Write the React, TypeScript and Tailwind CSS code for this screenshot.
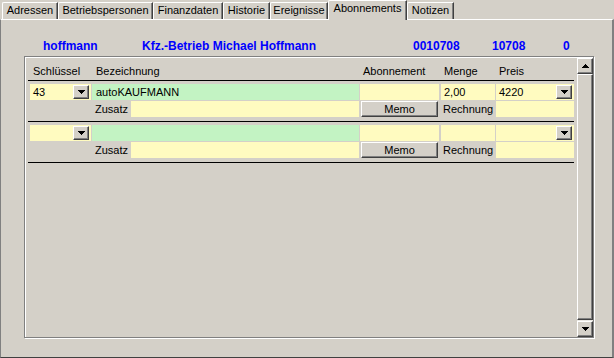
const tabs = [
  { label: "Adressen", w: "w-[56px]" },
  { label: "Betriebspersonen", w: "w-[95px]" },
  { label: "Finanzdaten", w: "w-[70px]" },
  { label: "Historie", w: "w-[47px]" },
  { label: "Ereignisse", w: "w-[58px]" },
  { label: "Abonnements", w: "w-[79px]", active: true },
  { label: "Notizen", w: "w-[47px]" },
];

const raised =
  "bg-[#d4d0c8] border border-t-white border-l-white border-r-[#404040] border-b-[#404040] shadow-[inset_-1px_-1px_0_#808080]";

const DownArrow = () => (
  <svg width="7" height="4" viewBox="0 0 7 4" shapeRendering="crispEdges">
    <path d="M0 0H7V1H6V2H5V3H4V4H3V3H2V2H1V1H0Z" fill="#000" />
  </svg>
);

const UpArrow = () => (
  <svg width="7" height="4" viewBox="0 0 7 4" shapeRendering="crispEdges">
    <path d="M3 0H4V1H5V2H6V3H7V4H0V3H1V2H2V1H3Z" fill="#000" />
  </svg>
);

const DropBtn = () => (
  <div className={`w-[16px] h-[14px] mr-[2px] flex items-center justify-center ${raised}`}>
    <DownArrow />
  </div>
);

type Row = { key: string; bez: string; menge: string; preis: string };

const rows: Row[] = [
  { key: "43", bez: "autoKAUFMANN", menge: "2,00", preis: "4220" },
  { key: "", bez: "", menge: "", preis: "" },
];

const SubRow = ({ row }: { row: Row }) => (
  <div className="pt-[3px] pb-[4px] pl-[2px] border-b border-black">
    <div className="flex h-[16px] leading-[13px]">
      <div className="w-[61px] bg-[#fffbc0] flex items-center justify-between pl-[3px]">
        <span>{row.key}</span>
        <DropBtn />
      </div>
      <div className="w-[267px] ml-[1px] bg-[#c3f3c3] flex items-center pl-[4px]">
        {row.bez}
      </div>
      <div className="w-[79px] ml-[1px] bg-[#fffbc0]"></div>
      <div className="w-[54px] ml-[2px] bg-[#fffbc0] flex items-center pl-[3px]">
        {row.menge}
      </div>
      <div className="w-[78px] ml-[1px] bg-[#fffbc0] flex items-center justify-between pl-[3px]">
        <span>{row.preis}</span>
        <DropBtn />
      </div>
    </div>
    <div className="flex h-[16px] mt-[1px] leading-[13px]">
      <div className="w-[62px]"></div>
      <div className="w-[39px] flex items-center pl-[3px]">Zusatz</div>
      <div className="w-[228px] bg-[#fffbc0]"></div>
      <div className={`w-[77px] ml-[2px] flex items-center justify-center ${raised}`}>
        Memo
      </div>
      <div className="w-[55px] ml-[3px] flex items-center pl-[2px]">Rechnung</div>
      <div className="w-[78px] bg-[#fffbc0]"></div>
    </div>
  </div>
);

export default function App() {
  return (
    <div
      className="w-[614px] h-[358px] bg-[#d4d0c8] text-[11px] text-black overflow-hidden"
      style={{ fontFamily: '"Liberation Sans", Arial, sans-serif' }}
    >
      {/* tabs */}
      <div className="flex items-end h-[19px] pl-[2px]">
        {tabs.map((t) =>
          t.active ? (
            <div
              key={t.label}
              className={`${t.w} h-[20px] -mb-[1px] relative z-10 bg-[#d4d0c8] border-l border-t border-l-white border-t-white border-r border-r-[#404040] shadow-[inset_-1px_0_0_#808080] flex justify-center pt-[1px] leading-[13px] rounded-tl-[2px]`}
            >
              {t.label}
            </div>
          ) : (
            <div
              key={t.label}
              className={`${t.w} h-[17px] bg-[#d4d0c8] border-l border-t border-l-white border-t-white border-r border-r-[#404040] shadow-[inset_-1px_0_0_#808080] flex justify-center pt-[1px] leading-[13px] rounded-tl-[2px]`}
            >
              {t.label}
            </div>
          )
        )}
      </div>

      {/* panel */}
      <div className="h-[339px] border-t border-t-white border-l border-l-[#808080] border-r-[2px] border-r-[#808080] border-b border-b-[#404040]">
        <div className="flex mt-[19px] ml-[42px] h-[14px] leading-[14px] text-[12px] font-bold text-[#0000ff]">
          <div className="w-[99px]">hoffmann</div>
          <div className="w-[271px]">Kfz.-Betrieb Michael Hoffmann</div>
          <div className="w-[79px]">0010708</div>
          <div className="w-[71px]">10708</div>
          <div>0</div>
        </div>

        {/* grid frame */}
        <div className="mt-[3px] ml-[23px] w-[570px] h-[282px] border border-[#808080] shadow-[inset_1px_1px_0_#fff,1px_1px_0_#fff] pt-[1px] pl-[1px] flex">
          <div className="w-[551px]">
            <div className="ml-[2px] w-[546px]">
              <div className="h-[23px] border-b border-black flex pt-[7px] leading-[13px]">
                <div className="w-[5px]"></div>
                <div className="w-[63px]">Schlüssel</div>
                <div className="w-[267px]">Bezeichnung</div>
                <div className="w-[81px]">Abonnement</div>
                <div className="w-[55px]">Menge</div>
                <div>Preis</div>
              </div>
              {rows.map((r, i) => (
                <SubRow key={i} row={r} />
              ))}
            </div>
          </div>

          {/* scrollbar */}
          <div className="w-[16px] h-[279px] flex flex-col">
            <div className={`h-[16px] flex items-center justify-center ${raised}`}>
              <UpArrow />
            </div>
            <div className={`flex-1 ${raised}`}></div>
            <div className="h-[1px] bg-[#ebe9e4]"></div>
            <div className={`h-[16px] flex items-center justify-center ${raised}`}>
              <DownArrow />
            </div>
          </div>
        </div>
      </div>
    </div>
  );
}
